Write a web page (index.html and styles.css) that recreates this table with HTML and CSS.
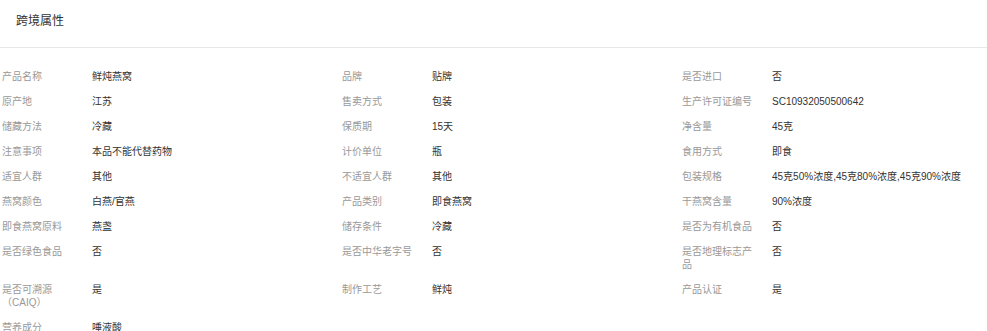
FILE: index.html
```html
<!DOCTYPE html>
<html lang="zh-CN">
<head>
<meta charset="utf-8">
<title>跨境属性</title>
<link rel="stylesheet" href="styles.css">
</head>
<body>
<div class="panel">
  <div class="panel-head">跨境属性</div>
  <div class="attrs">
    <div class="attr"><span class="k">产品名称</span><span class="v">鲜炖燕窝</span></div>
    <div class="attr"><span class="k">品牌</span><span class="v">贴牌</span></div>
    <div class="attr"><span class="k">是否进口</span><span class="v">否</span></div>

    <div class="attr"><span class="k">原产地</span><span class="v">江苏</span></div>
    <div class="attr"><span class="k">售卖方式</span><span class="v">包装</span></div>
    <div class="attr"><span class="k">生产许可证编号</span><span class="v">SC10932050500642</span></div>

    <div class="attr"><span class="k">储藏方法</span><span class="v">冷藏</span></div>
    <div class="attr"><span class="k">保质期</span><span class="v">15天</span></div>
    <div class="attr"><span class="k">净含量</span><span class="v">45克</span></div>

    <div class="attr"><span class="k">注意事项</span><span class="v">本品不能代替药物</span></div>
    <div class="attr"><span class="k">计价单位</span><span class="v">瓶</span></div>
    <div class="attr"><span class="k">食用方式</span><span class="v">即食</span></div>

    <div class="attr"><span class="k">适宜人群</span><span class="v">其他</span></div>
    <div class="attr"><span class="k">不适宜人群</span><span class="v">其他</span></div>
    <div class="attr"><span class="k">包装规格</span><span class="v">45克50%浓度,45克80%浓度,45克90%浓度</span></div>

    <div class="attr"><span class="k">燕窝颜色</span><span class="v">白燕/官燕</span></div>
    <div class="attr"><span class="k">产品类别</span><span class="v">即食燕窝</span></div>
    <div class="attr"><span class="k">干燕窝含量</span><span class="v">90%浓度</span></div>

    <div class="attr"><span class="k">即食燕窝原料</span><span class="v">燕盏</span></div>
    <div class="attr"><span class="k">储存条件</span><span class="v">冷藏</span></div>
    <div class="attr"><span class="k">是否为有机食品</span><span class="v">否</span></div>

    <div class="attr"><span class="k">是否绿色食品</span><span class="v">否</span></div>
    <div class="attr"><span class="k">是否中华老字号</span><span class="v">否</span></div>
    <div class="attr"><span class="k">是否地理标志产品</span><span class="v">否</span></div>

    <div class="attr"><span class="k">是否可溯源（CAIQ）</span><span class="v">是</span></div>
    <div class="attr"><span class="k">制作工艺</span><span class="v">鲜炖</span></div>
    <div class="attr"><span class="k">产品认证</span><span class="v">是</span></div>

    <div class="attr"><span class="k">营养成分</span><span class="v">唾液酸</span></div>
  </div>
</div>
</body>
</html>
```
FILE: styles.css
```css
html, body {
  margin: 0;
  padding: 0;
  background: #fff;
  overflow: hidden;
}
body {
  font-family: "Liberation Sans", Arial, "Noto Sans CJK SC", sans-serif;
  color: #333;
}
.panel-head {
  font-size: 12px;
  line-height: 42px;
  padding: 0 0 5px 16px;
  color: #333;
  border-bottom: 1px solid #e8e8e8;
}
.attrs {
  display: grid;
  grid-template-columns: repeat(3, 340px);
  row-gap: 12px;
  padding: 22px 0 0 2px;
  font-size: 10px;
  line-height: 13px;
}
.attr {
  display: flex;
  align-items: flex-start;
}
.k {
  flex: 0 0 75px;
  margin-right: 15px;
  color: #999;
}
.v {
  color: #333;
  white-space: nowrap;
}
```
